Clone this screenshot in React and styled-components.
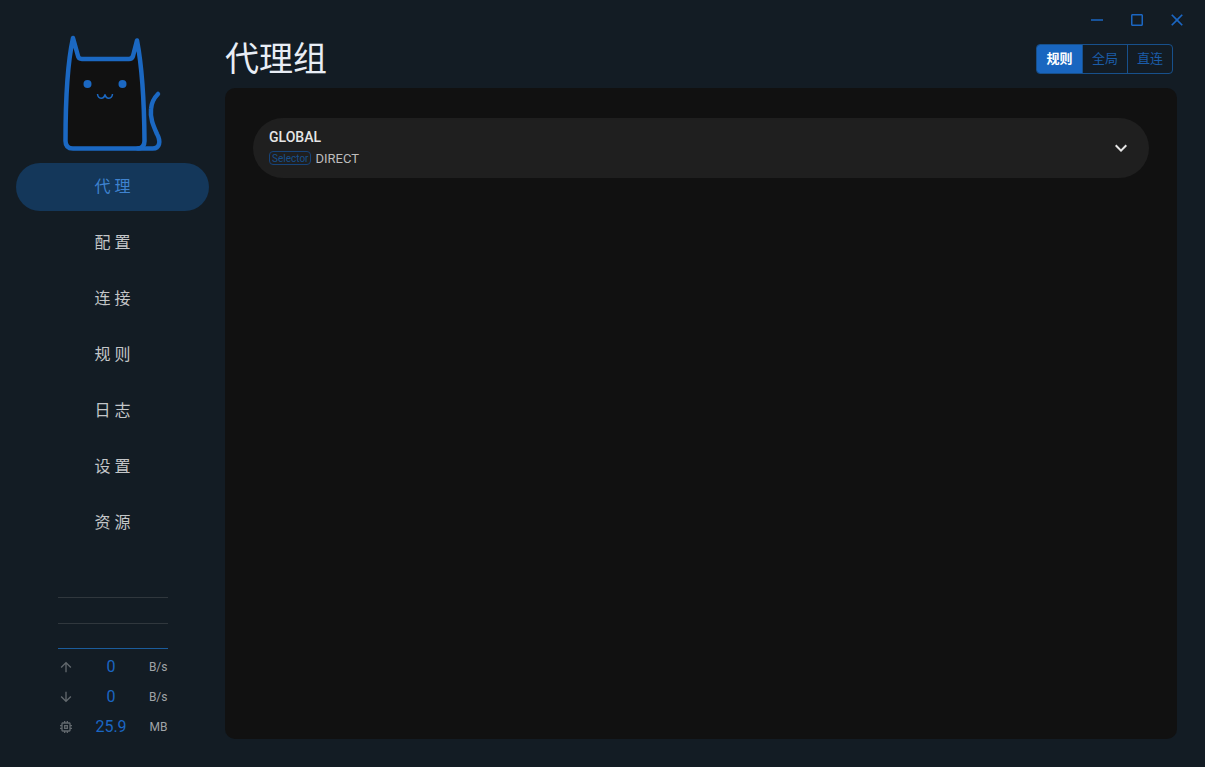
import React, { useState } from "react";
import styled, { createGlobalStyle } from "styled-components";
import {
  MdArrowDownward,
  MdArrowUpward,
  MdClose,
  MdCropSquare,
  MdExpandMore,
  MdHorizontalRule,
  MdOutlineMemory,
} from "react-icons/md";

const GlobalStyle = createGlobalStyle`
  * {
    box-sizing: border-box;
  }
  body {
    margin: 0;
    background: #131c24;
    color: #ffffff;
    font-family: Roboto, "Noto Sans CJK SC", sans-serif;
  }
  button {
    font-family: inherit;
    cursor: pointer;
  }
`;

const Layout = styled.div`
  display: flex;
  min-height: 100vh;
`;

const Sidebar = styled.aside`
  display: flex;
  flex-direction: column;
  flex: 0 0 225px;
  padding: 32px 16px 25px;
`;

const Logo = styled.svg`
  display: block;
  width: 109px;
  height: 123px;
  margin: 0 auto 8px;
`;

const Menu = styled.nav`
  display: flex;
  flex-direction: column;
  gap: 8px;
`;

const MenuLink = styled.a`
  height: 48px;
  border-radius: 24px;
  background: ${(props) => (props.$active ? "#14375a" : "transparent")};
  color: ${(props) => (props.$active ? "#3f83d0" : "#c4c6c8")};
  font-size: 16px;
  line-height: 48px;
  letter-spacing: 4px;
  text-align: center;
  text-decoration: none;
  text-indent: 4px;
`;

const Traffic = styled.div`
  width: 110px;
  margin: auto auto 0;
`;

const Graph = styled.svg`
  display: block;
  width: 100%;
  height: 55px;
`;

const TrafficRow = styled.div`
  display: flex;
  align-items: center;
  height: 30px;
  color: #62686d;
  svg {
    width: 16px;
    height: 16px;
  }
`;

const Amount = styled.span`
  flex: 1;
  padding: 0 0 2px 8px;
  color: #1b66c2;
  font-size: 16px;
  text-align: center;
`;

const Unit = styled.span`
  width: 27px;
  color: #a0a4a7;
  font-size: 12px;
  text-align: right;
`;

const Page = styled.main`
  display: flex;
  flex: 1;
  flex-direction: column;
  min-width: 0;
  padding: 0 28px 28px 0;
`;

const WindowControls = styled.div`
  display: flex;
  align-self: flex-end;
  height: 40px;
  margin-right: -20px;
`;

const ControlButton = styled.button`
  display: grid;
  place-items: center;
  width: 40px;
  padding: 0;
  border: none;
  background: none;
  color: #1b66c2;
  svg {
    width: ${(props) => props.$size || 16}px;
    height: ${(props) => props.$size || 16}px;
  }
`;

const Header = styled.header`
  display: flex;
  align-items: center;
  justify-content: space-between;
  height: 38px;
  margin-bottom: 10px;
  padding-right: 4px;
`;

const Title = styled.h1`
  margin: 0;
  color: #e8edf5;
  font-size: 34px;
  font-weight: 400;
  line-height: 38px;
`;

const ModeGroup = styled.div`
  display: flex;
  height: 30px;
  border: 1px solid #17508c;
  border-radius: 4px;
  overflow: hidden;
`;

const ModeButton = styled.button`
  width: 45px;
  padding: 0 0 4px;
  border: none;
  background: ${(props) => (props.$active ? "#1966c0" : "transparent")};
  color: ${(props) => (props.$active ? "#ffffff" : "#1b5ca8")};
  font-size: 13px;
  font-weight: ${(props) => (props.$active ? 700 : 400)};
  & + & {
    border-left: 1px solid #17508c;
  }
`;

const Panel = styled.section`
  flex: 1;
  padding: 30px 28px;
  border-radius: 10px;
  background: #111111;
`;

const GroupButton = styled.button`
  display: flex;
  align-items: center;
  justify-content: space-between;
  width: 100%;
  height: 60px;
  padding: 0 16px;
  border: none;
  border-radius: 30px;
  background: #1f1f1f;
  color: #e6e6e6;
  text-align: left;
  > svg {
    width: 24px;
    height: 24px;
  }
`;

const GroupName = styled.div`
  font-size: 14px;
  font-weight: 500;
  line-height: 20px;
`;

const GroupDetail = styled.div`
  display: flex;
  align-items: center;
  gap: 4px;
  height: 22px;
  color: #bdbdbd;
  font-size: 13px;
`;

const Tag = styled.span`
  height: 14px;
  padding: 0 2px;
  border: 1px solid #17447a;
  border-radius: 4px;
  color: #17508c;
  font-size: 10px;
  line-height: 14px;
`;

const pages = ["代理", "配置", "连接", "规则", "日志", "设置", "资源"];
const modes = ["规则", "全局", "直连"];
const stats = [
  { icon: MdArrowUpward, amount: "0", unit: "B/s" },
  { icon: MdArrowDownward, amount: "0", unit: "B/s" },
  { icon: MdOutlineMemory, amount: "25.9", unit: "MB" },
];

const CatLogo = () => (
  <Logo viewBox="0 0 109 123" fill="none" aria-hidden="true">
    <path
      d="M15 6 L20 24 Q20.500 27 24 27 H71 Q74 27 75 24 L79 8.500 Q86 45 86.500 109 Q86.500 116.500 79 116.500 H15 Q7.500 116.500 7.500 109 Q7.500 40 15 6Z"
      fill="#111111"
      stroke="#1b68c2"
      strokeWidth="4.5"
      strokeLinejoin="round"
    />
    <path
      d="M80 116.500 H94 C102 117 103 109 99 102 C95 93 92 86 93 77 C93.500 70 97 65 100 62"
      stroke="#1b68c2"
      strokeWidth="4.5"
      strokeLinecap="round"
    />
    <circle cx="29.5" cy="52" r="4" fill="#1b68c2" />
    <circle cx="64.5" cy="52" r="4" fill="#1b68c2" />
    <path
      d="M39.500 62 C40 67.500 46 67.500 47 62.500 C48 67.500 54 67.500 54.500 62"
      stroke="#1b68c2"
      strokeWidth="1.5"
    />
  </Logo>
);

const App = () => {
  const [page, setPage] = useState("代理");
  const [mode, setMode] = useState("规则");

  return (
    <>
      <GlobalStyle />
      <Layout>
        <Sidebar>
          <CatLogo />
          <Menu>
            {pages.map((name) => (
              <MenuLink
                key={name}
                href="#"
                $active={name === page}
                onClick={() => setPage(name)}
              >
                {name}
              </MenuLink>
            ))}
          </Menu>
          <Traffic>
            <Graph viewBox="0 0 110 55" preserveAspectRatio="none">
              <path d="M0 .5H110M0 26.500H110" stroke="#30373d" />
              <path d="M0 51.500H110" stroke="#1b5c9c" />
            </Graph>
            {stats.map(({ icon: Icon, amount, unit }, i) => (
              <TrafficRow key={i}>
                <Icon />
                <Amount>{amount}</Amount>
                <Unit>{unit}</Unit>
              </TrafficRow>
            ))}
          </Traffic>
        </Sidebar>
        <Page>
          <WindowControls>
            <ControlButton aria-label="Minimize" $size={18}>
              <MdHorizontalRule />
            </ControlButton>
            <ControlButton aria-label="Maximize" $size={18}>
              <MdCropSquare />
            </ControlButton>
            <ControlButton aria-label="Close" $size={20}>
              <MdClose />
            </ControlButton>
          </WindowControls>
          <Header>
            <Title>代理组</Title>
            <ModeGroup>
              {modes.map((name) => (
                <ModeButton
                  key={name}
                  $active={name === mode}
                  onClick={() => setMode(name)}
                >
                  {name}
                </ModeButton>
              ))}
            </ModeGroup>
          </Header>
          <Panel>
            <GroupButton>
              <div>
                <GroupName>GLOBAL</GroupName>
                <GroupDetail>
                  <Tag>Selector</Tag>
                  DIRECT
                </GroupDetail>
              </div>
              <MdExpandMore />
            </GroupButton>
          </Panel>
        </Page>
      </Layout>
    </>
  );
};

export default App;
